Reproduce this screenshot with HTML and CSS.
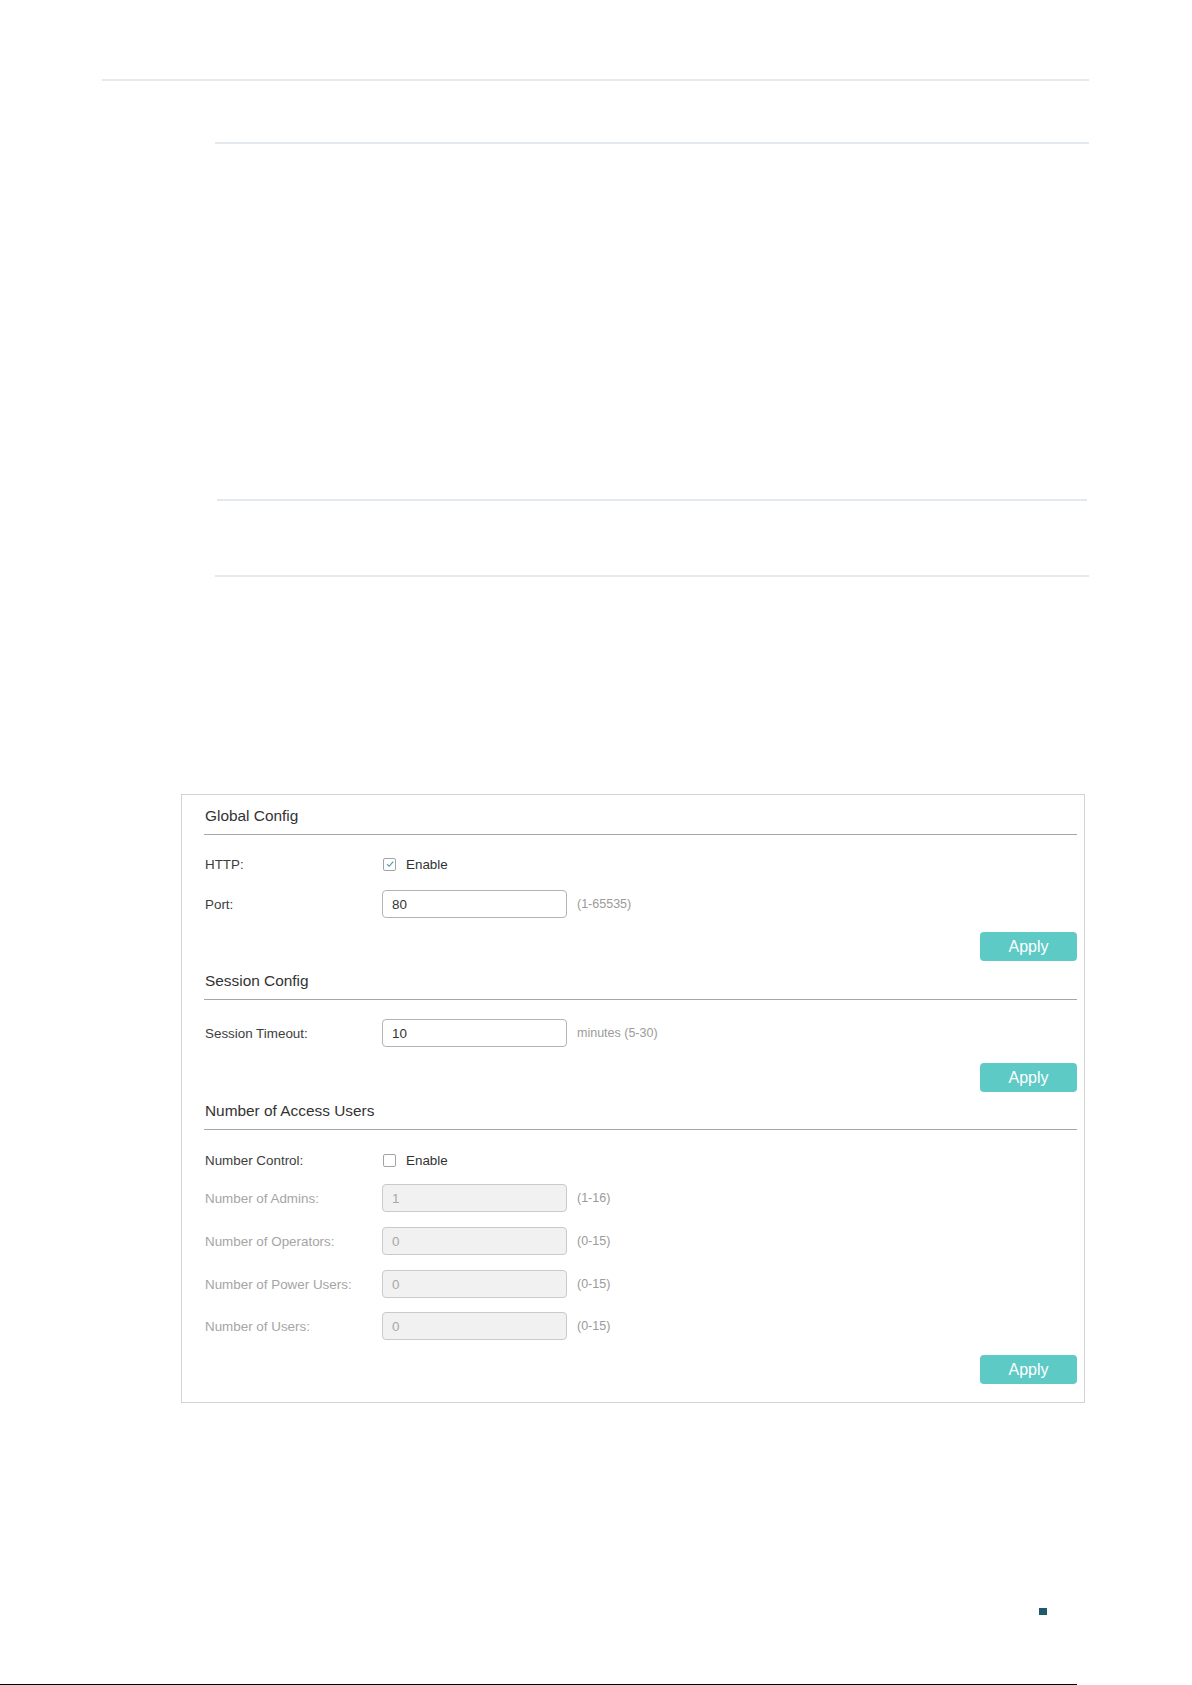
FILE: index.html
```html
<!DOCTYPE html>
<html>
<head>
	<meta charset="utf-8">
	<title>HTTP Config</title>
	<link rel="stylesheet" href="styles.css">
</head>
<body>
<div class="page">
	<div class="rule rule-head"></div>
	<div class="rule rule-table-top"></div>
	<div class="rule rule-table-mid"></div>
	<div class="rule rule-table-bot"></div>

	<div class="panel">
		<div class="section-title">Global Config</div>
		<div class="field mt-15">
			<span class="label">HTTP:</span>
			<span class="check is-on">
				<svg width="10" height="10" viewBox="0 0 10 10"><path d="M2 5.2 L4.2 7.3 L8.2 2.6" fill="none" stroke="#4a95ad" stroke-width="1.1"/></svg>
			</span>
			<span class="check-text">Enable</span>
		</div>
		<div class="field mt-12">
			<span class="label">Port:</span>
			<input class="ipt" type="text" value="80">
			<span class="hint">(1-65535)</span>
		</div>
		<div class="actions mt-14"><button class="btn">Apply</button></div>

		<div class="section-title mt-8">Session Config</div>
		<div class="field mt-19">
			<span class="label">Session Timeout:</span>
			<input class="ipt" type="text" value="10">
			<span class="hint">minutes (5-30)</span>
		</div>
		<div class="actions mt-16"><button class="btn">Apply</button></div>

		<div class="section-title mt-7">Number of Access Users</div>
		<div class="field mt-16">
			<span class="label">Number Control:</span>
			<span class="check"></span>
			<span class="check-text">Enable</span>
		</div>
		<div class="field off mt-10">
			<span class="label">Number of Admins:</span>
			<input class="ipt" type="text" value="1" disabled>
			<span class="hint">(1-16)</span>
		</div>
		<div class="field off mt-15">
			<span class="label">Number of Operators:</span>
			<input class="ipt" type="text" value="0" disabled>
			<span class="hint">(0-15)</span>
		</div>
		<div class="field off mt-15">
			<span class="label">Number of Power Users:</span>
			<input class="ipt" type="text" value="0" disabled>
			<span class="hint">(0-15)</span>
		</div>
		<div class="field off mt-14">
			<span class="label">Number of Users:</span>
			<input class="ipt" type="text" value="0" disabled>
			<span class="hint">(0-15)</span>
		</div>
		<div class="actions mt-15"><button class="btn">Apply</button></div>
	</div>

	<div class="page-mark"></div>
	<div class="page-foot"></div>
</div>
</body>
</html>
```

FILE: styles.css
```css
* {
	box-sizing: border-box;
}

body {
	margin: 0px;
	padding: 0px;
	background: #fff;
	font-family: "Liberation Sans", Arial, sans-serif;
	color: #333;
}

.page {
	width: 1192px;
	height: 1685px;
	padding-top: 79px;
	overflow: hidden;
}

.rule {
	height: 2px;
	background: #e3e9ef;
}

.rule-head {
	margin-left: 102px;
	width: 987px;
}

.rule-table-top {
	margin: 61px 0 0 215px;
	width: 874px;
}

.rule-table-mid {
	margin: 355px 0 0 217px;
	width: 870px;
}

.rule-table-bot {
	margin: 74px 0 0 215px;
	width: 874px;
}

/* config panel */
.panel {
	margin: 217px 0 0 181px;
	width: 904px;
	border: 1px solid #d3d3d3;
	padding: 9px 7px 18px 23px;
}

.section-title {
	margin-left: -1px;
	padding: 0 0 6px 1px;
	height: 31px;
	line-height: 24px;
	font-size: 15.4px;
	color: #333;
	border-bottom: 1px solid #a6a6a6;
}

.field {
	display: flex;
	align-items: center;
	height: 28px;
	font-size: 13.4px;
}

.label {
	width: 177px;
	flex: none;
	color: #3d3d3d;
}

.field.off .label {
	color: #a5a5a5;
}

.check {
	width: 13px;
	height: 13px;
	border: 1px solid #a3a3a3;
	border-radius: 2px;
	display: flex;
	align-items: center;
	justify-content: center;
	margin-left: 1px;
}

.check-text {
	margin-left: 10px;
	color: #333;
}

.ipt {
	width: 185px;
	height: 28px;
	margin: 0px;
	padding: 0 0 0 9px;
	border: 1px solid #b3b3b3;
	border-radius: 4px;
	background: #fff;
	font-family: inherit;
	font-size: 13.4px;
	color: #333;
	outline: none;
}

.ipt:disabled {
	background: #f1f1f1;
	border-color: #cacaca;
	color: #a8a8a8;
}

.hint {
	margin-left: 10px;
	font-size: 12.5px;
	color: #9b9b9b;
}

.actions {
	display: flex;
	justify-content: flex-end;
}

.btn {
	width: 97px;
	height: 29px;
	margin: 0px;
	padding: 0px;
	border: none;
	border-radius: 4px;
	background: #5ecac6;
	color: #fff;
	font-family: inherit;
	font-size: 16px;
}

.mt-7 { margin-top: 7px; }
.mt-8 { margin-top: 8px; }
.mt-10 { margin-top: 10px; }
.mt-12 { margin-top: 12px; }
.mt-14 { margin-top: 14px; }
.mt-15 { margin-top: 15px; }
.mt-16 { margin-top: 16px; }
.mt-19 { margin-top: 19px; }

.page-mark {
	margin: 205px 0 0 1039px;
	width: 8px;
	height: 7px;
	background: #1f5a6a;
}

.page-foot {
	margin-top: 69px;
	width: 1077px;
	height: 1px;
	background: #000;
}
```
